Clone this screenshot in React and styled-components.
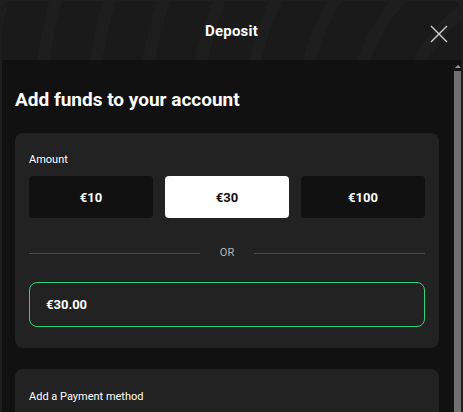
import styled, { createGlobalStyle } from "styled-components"

const Global = createGlobalStyle`
    html, body {
        margin: 0;
        padding: 0;
        background: #1e1e1e;
        font-family: Roboto, "Noto Sans", "Liberation Sans", sans-serif;
        overflow: hidden;
    }
    * { box-sizing: border-box; }
`
const Modal = styled.div`
    margin: 1px 0 0 2px;
    width: 459px;
    border-radius: 10px 10px 0 0;
    overflow: hidden;
    background: #111111;
`
const Header = styled.header`
    position: relative;
    height: 59px;
    display: flex;
    align-items: center;
    justify-content: center;
    background:
        repeating-radial-gradient(circle at 120% 220%, rgba(255,255,255,0) 0 40px, rgba(255,255,255,0.015) 40px 52px),
        #1a1a1a;
    & h1 {
        margin: 0;
        color: #ffffff;
        font-size: 15px;
        font-weight: 700;
        letter-spacing: 0.2px;
    }
`
const CloseButton = styled.button`
    position: absolute;
    right: 12px;
    top: 23px;
    width: 20px;
    height: 20px;
    padding: 0;
    border: none;
    background: none;
    display: flex;
    align-items: center;
    justify-content: center;
`
const BodyRow = styled.div`
    display: flex;
    align-items: stretch;
    height: 360px;
`
const Content = styled.div`
    flex: 1 1 0;
    min-width: 0;
    padding: 28px 15px 0 13px;
`
const Scrollbar = styled.div`
    flex: 0 0 7px;
    width: 7px;
    display: flex;
    flex-direction: column;
    align-items: center;
    padding-top: 5px;
    gap: 3px;
    background: #111111;
`
const Arrow = styled.div`
    width: 0;
    height: 0;
    border-left: 3px solid transparent;
    border-right: 3px solid transparent;
    border-bottom: 3px solid #9a9a9a;
`
const Thumb = styled.div`
    flex: 1 1 auto;
    width: 7px;
    background: #707070;
`
const Title = styled.h2`
    margin: 0 0 21px 0;
    color: #ffffff;
    font-size: 19px;
    line-height: 24px;
    font-weight: 700;
`
const Card = styled.section`
    background: #222222;
    border-radius: 8px;
    padding: 20px 14px 21px 14px;
    margin-bottom: 21px;
`
const Label = styled.p`
    margin: 0;
    color: #ffffff;
    font-size: 11px;
    line-height: 14px;
`
const Presets = styled.div`
    margin-top: 9px;
    display: grid;
    grid-template-columns: repeat(3, 1fr);
    gap: 12px;
`
const Preset = styled.button`
    height: 42px;
    border: none;
    border-radius: 4px;
    background: ${p => (p.$active ? "#ffffff" : "#111111")};
    color: ${p => (p.$active ? "#111111" : "#ffffff")};
    font-family: inherit;
    font-size: 13px;
    font-weight: 700;
`
const Divider = styled.div`
    margin-top: 28px;
    display: flex;
    align-items: center;
    gap: 20px;
    color: #b8b8b8;
    font-size: 11px;
    line-height: 14px;
    &::before, &::after {
        content: "";
        flex: 1;
        height: 1px;
        background: #4a4a4a;
    }
`
const AmountInput = styled.div`
    margin-top: 22px;
    height: 45px;
    border: 1px solid #2fd27d;
    border-radius: 8px;
    display: flex;
    align-items: center;
    padding-left: 16px;
    color: #ffffff;
    font-size: 13px;
    font-weight: 700;
`
const PaymentCard = styled(Card)`
    padding-top: 21px;
    height: 120px;
`

const amounts = ["€10", "€30", "€100"]

const App = () => {
    return (
        <>
            <Global />
            <Modal>
                <Header>
                    <h1>Deposit</h1>
                    <CloseButton aria-label="Close">
                        <svg width="18" height="18" viewBox="0 0 18 18">
                            <path d="M1 1 L17 17 M17 1 L1 17" stroke="#d0d0d0" strokeWidth="1.4" />
                        </svg>
                    </CloseButton>
                </Header>
                <BodyRow>
                    <Content>
                        <Title>Add funds to your account</Title>
                        <Card>
                            <Label>Amount</Label>
                            <Presets>
                                {amounts.map(a => (
                                    <Preset key={a} $active={a === "€30"}>{a}</Preset>
                                ))}
                            </Presets>
                            <Divider>OR</Divider>
                            <AmountInput>€30.00</AmountInput>
                        </Card>
                        <PaymentCard>
                            <Label>Add a Payment method</Label>
                        </PaymentCard>
                    </Content>
                    <Scrollbar aria-hidden="true">
                        <Arrow />
                        <Thumb />
                    </Scrollbar>
                </BodyRow>
            </Modal>
        </>
    )
}

export default App
